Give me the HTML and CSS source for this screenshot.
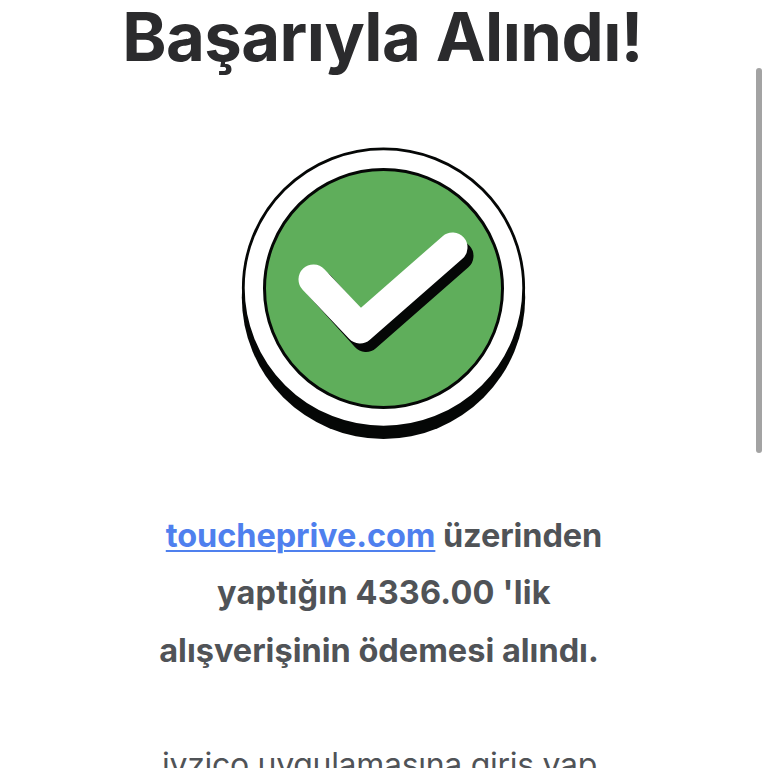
FILE: index.html
```html
<!DOCTYPE html>
<html lang="tr">
<head>
<meta charset="utf-8">
<title>Ödeme</title>
<link rel="stylesheet" href="styles.css">
</head>
<body>
<main class="page">
  <h1 class="title">Başarıyla Alındı!</h1>
  <svg class="badge" viewBox="0 0 288 296" aria-hidden="true">
    <circle cx="143.5" cy="150.3" r="141.7" fill="#050706"/>
    <ellipse cx="143.5" cy="141" rx="140.2" ry="139.2" fill="#fff" stroke="#050706" stroke-width="2.8"/>
    <circle cx="143.5" cy="141.5" r="119" fill="#5fae5b" stroke="#050706" stroke-width="3"/>
    <path d="M80 139L126 190L218.5 109" fill="none" stroke="#050706" stroke-width="30" stroke-linecap="round" stroke-linejoin="round"/>
    <path d="M73.5 132.5L120 181.5L212.5 100.5" fill="none" stroke="#fff" stroke-width="30" stroke-linecap="round" stroke-linejoin="round"/>
  </svg>
  <p class="message">
    <span class="line site"><a class="link" href="#">toucheprive.com</a> üzerinden</span>
    <span class="line amount">yaptığın 4336.00 'lik</span>
    <span class="line closing">alışverişinin ödemesi alındı.</span>
  </p>
  <p class="note">iyzico uygulamasına giriş yap</p>
</main>
<div class="scrollbar"></div>
</body>
</html>
```
FILE: styles.css
```css
html, body { margin: 0; height: 100%; overflow: hidden; background: #fff; }
body { font-family: Inter, "Liberation Sans", sans-serif; }
.page { display: flex; flex-direction: column; align-items: center; height: 768px; overflow: hidden; }
.page > * { flex: none; }
.title { margin: 0 0 0 -3px; height: 147px; line-height: 74px; font-size: 67px; font-weight: 700; letter-spacing: -0.55px; color: #2b2b2d; white-space: nowrap; }
.badge { display: block; width: 288px; height: 296px; }
.message { margin: 64px 0 0; font-size: 32.5px; line-height: 57.3px; font-weight: 650; color: #505357; text-align: center; white-space: nowrap; }
.line { display: block; }
.site { letter-spacing: -0.1px; }
.amount { letter-spacing: 0.2px; }
.closing { padding-right: 10px; }
.link { color: #4f80ee; text-decoration: underline; text-decoration-thickness: 2px; text-underline-offset: 3px; }
.note { margin: 57px 9px 0 0; font-size: 32px; line-height: 57.5px; letter-spacing: -0.3px; color: #505357; white-space: nowrap; }
.scrollbar { position: absolute; left: 756px; top: 68px; width: 6px; height: 385px; border-radius: 3px; background: #a3a3a3; }
```
